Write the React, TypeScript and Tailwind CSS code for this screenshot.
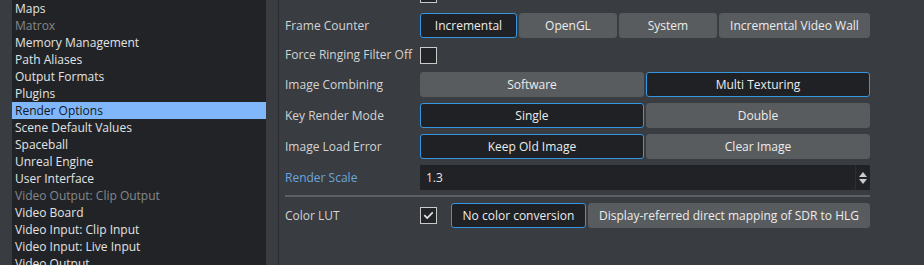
import React from 'react'

const SIDEBAR_ITEMS: { label: string; muted?: boolean; active?: boolean }[] = [
  { label: 'Maps' },
  { label: 'Matrox', muted: true },
  { label: 'Memory Management' },
  { label: 'Path Aliases' },
  { label: 'Output Formats' },
  { label: 'Plugins' },
  { label: 'Render Options', active: true },
  { label: 'Scene Default Values' },
  { label: 'Spaceball' },
  { label: 'Unreal Engine' },
  { label: 'User Interface' },
  { label: 'Video Output: Clip Output', muted: true },
  { label: 'Video Board' },
  { label: 'Video Input: Clip Input' },
  { label: 'Video Input: Live Input' },
  { label: 'Video Output' },
]

function Checkbox({ checked = false }: { checked?: boolean }) {
  return (
    <div className="w-[17px] h-[17px] border border-[#c9cacb] bg-[#232529] flex items-center justify-center">
      {checked && (
        <svg className="w-[11px] h-[11px]" viewBox="0 0 12 12" fill="none">
          <path d="M2 6.2l2.6 2.6L10 3.3" stroke="#e4e4e4" strokeWidth={1.8} strokeLinecap="square" />
        </svg>
      )}
    </div>
  )
}

function Seg({ label, selected = false, className = '' }: { label: string; selected?: boolean; className?: string }) {
  return (
    <div
      className={`h-[25px] rounded-[3px] flex items-center justify-center text-[12px] text-[#ececec] border ${
        selected ? 'bg-[#1f2125] border-[#3796e2]' : 'bg-[#595c5f] border-[#595c5f]'
      } ${className}`}
    >
      {label}
    </div>
  )
}

function Row({ label, blue = false, h = 'h-[25px]', children }: { label: string; blue?: boolean; h?: string; children: React.ReactNode }) {
  return (
    <div className={`flex items-center ${h}`}>
      <div className={`w-[135px] shrink-0 text-[12px] ${blue ? 'text-[#6aa5de]' : 'text-[#d3d4d5]'}`}>{label}</div>
      <div className="flex items-center flex-1">{children}</div>
    </div>
  )
}

export default function App() {
  return (
    <div
      className="w-[924px] h-[265px] overflow-hidden flex bg-[#393c40]"
      style={{ fontFamily: '"Open Sans", "Noto Sans", sans-serif' }}
    >
      {/* Sidebar list */}
      <div className="w-[278px] shrink-0 pl-[12px] pr-[12px] bg-[#393c40]">
        <div className="h-full bg-[#212327]">
          {SIDEBAR_ITEMS.map((item) => (
            <div
              key={item.label}
              className={`h-[17px] pl-[3px] flex items-center text-[12px] whitespace-nowrap ${
                item.active ? 'bg-[#80b6fa] text-[#15171a]' : item.muted ? 'text-[#85888b]' : 'text-[#e2e3e4]'
              }`}
            >
              {item.label}
            </div>
          ))}
        </div>
      </div>

      {/* Settings panel */}
      <div className="flex-1 border-l border-[#2b2d31] pl-[6px]">
        <div className="w-[585px] mt-[-18px] flex flex-col gap-[6px]">
          <Row label="Execute All Animations">
            <Checkbox />
          </Row>
          <Row label="Frame Counter">
            <div className="flex gap-[2px] w-full">
              <Seg label="Incremental" selected className="w-[97px]" />
              <Seg label="OpenGL" className="w-[98px]" />
              <Seg label="System" className="w-[98px]" />
              <Seg label="Incremental Video Wall" className="flex-1" />
            </div>
          </Row>
          <Row label="Force Ringing Filter Off" h="h-[22px]">
            <Checkbox />
          </Row>
          <Row label="Image Combining">
            <div className="flex gap-[2px] w-full">
              <Seg label="Software" className="flex-1" />
              <Seg label="Multi Texturing" selected className="flex-1" />
            </div>
          </Row>
          <Row label="Key Render Mode">
            <div className="flex gap-[2px] w-full">
              <Seg label="Single" selected className="flex-1" />
              <Seg label="Double" className="flex-1" />
            </div>
          </Row>
          <Row label="Image Load Error">
            <div className="flex gap-[2px] w-full">
              <Seg label="Keep Old Image" selected className="flex-1" />
              <Seg label="Clear Image" className="flex-1" />
            </div>
          </Row>
          <Row label="Render Scale" blue>
            <div className="w-full h-[25px] bg-[#202226] flex items-center">
              <span className="flex-1 pl-[6px] text-[12px] text-[#e6e6e6]">1.3</span>
              <div className="w-[15px] h-full border-l border-[#2c2e32] flex flex-col items-center justify-center gap-[2px]">
                <svg width="8" height="5" viewBox="0 0 8 5"><path d="M4 0L8 5H0z" fill="#c9cacb" /></svg>
                <svg width="8" height="5" viewBox="0 0 8 5"><path d="M0 0h8L4 5z" fill="#c9cacb" /></svg>
              </div>
            </div>
          </Row>
          <div className="h-[2px] bg-[#5c5f63] mt-[-1px]" />
          <Row label="Color LUT">
            <Checkbox checked />
            <div className="flex gap-[2px] flex-1 ml-[14px]">
              <Seg label="No color conversion" selected className="w-[135px]" />
              <Seg label="Display-referred direct mapping of SDR to HLG" className="flex-1" />
            </div>
          </Row>
        </div>
      </div>
    </div>
  )
}
